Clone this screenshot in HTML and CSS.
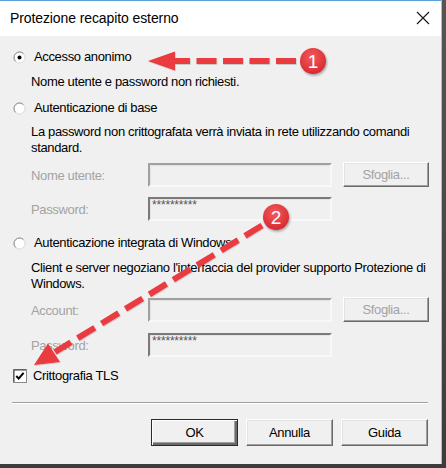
FILE: index.html
```html
<!DOCTYPE html>
<html lang="it">
<head>
<meta charset="utf-8">
<title>Protezione recapito esterno</title>
<link rel="stylesheet" href="styles.css">
</head>
<body>
<div class="frame">
  <div class="titlebar">
    <span class="title">Protezione recapito esterno</span>
    <svg class="close" width="14" height="14" viewBox="0 0 14 14"><path d="M1 1 L13 13 M13 1 L1 13" stroke="#1a1a1a" stroke-width="1.2" fill="none"/></svg>
  </div>
  <div class="content">
    <div class="radio-row r1">
      <svg class="radio" width="13" height="13" viewBox="0 0 13 13">
        <circle cx="6.5" cy="6.5" r="5.5" fill="#fff" stroke="#d8d8d8"/>
        <path d="M2.6 10.4 A5.5 5.5 0 0 1 10.4 2.6" stroke="#8a8a8a" fill="none"/>
        <circle cx="6.5" cy="6.5" r="2" fill="#000"/>
      </svg>
      <span>Accesso anonimo</span>
    </div>
    <p class="desc d1">Nome utente e password non richiesti.</p>

    <div class="radio-row r2">
      <svg class="radio" width="13" height="13" viewBox="0 0 13 13">
        <circle cx="6.5" cy="6.5" r="5.5" fill="#fff" stroke="#d8d8d8"/>
        <path d="M2.6 10.4 A5.5 5.5 0 0 1 10.4 2.6" stroke="#8a8a8a" fill="none"/>
      </svg>
      <span>Autenticazione di base</span>
    </div>
    <p class="desc d2">La password non crittografata verrà inviata in rete utilizzando comandi<br>standard.</p>
    <div class="field-row f1">
      <span class="label">Nome utente:</span>
      <div class="input"></div>
      <div class="btn disabled">Sfoglia...</div>
    </div>
    <div class="field-row f2">
      <span class="label">Password:</span>
      <div class="input pwd">**********</div>
    </div>

    <div class="radio-row r3">
      <svg class="radio" width="13" height="13" viewBox="0 0 13 13">
        <circle cx="6.5" cy="6.5" r="5.5" fill="#fff" stroke="#d8d8d8"/>
        <path d="M2.6 10.4 A5.5 5.5 0 0 1 10.4 2.6" stroke="#8a8a8a" fill="none"/>
      </svg>
      <span>Autenticazione integrata di Windows</span>
    </div>
    <p class="desc d3">Client e server negoziano l'interfaccia del provider supporto Protezione di<br>Windows.</p>
    <div class="field-row f3">
      <span class="label">Account:</span>
      <div class="input"></div>
      <div class="btn disabled">Sfoglia...</div>
    </div>
    <div class="field-row f4">
      <span class="label">Password:</span>
      <div class="input pwd">**********</div>
    </div>

    <div class="check-row">
      <svg class="check" width="14" height="14" viewBox="0 0 14 14">
        <rect x="0.5" y="0.5" width="13" height="13" fill="#fff" stroke="#8a8a8a"/>
        <path d="M1 13 V1 H13" stroke="#3c3c3c" fill="none"/>
        <path d="M3.3 7 L5.7 9.6 L10.6 3.8" stroke="#000" stroke-width="2" fill="none"/>
      </svg>
      <span>Crittografia TLS</span>
    </div>

    <div class="separator"></div>

    <div class="buttons">
      <div class="btn default">OK</div>
      <div class="btn">Annulla</div>
      <div class="btn">Guida</div>
    </div>
  </div>

  <svg class="annot" width="442" height="464" viewBox="0 0 442 464">
    <defs>
      <radialGradient id="bg" cx="45%" cy="35%" r="65%">
        <stop offset="0" stop-color="#f45a5e"/>
        <stop offset="1" stop-color="#d52a30"/>
      </radialGradient>
      <filter id="sh" x="-30%" y="-30%" width="160%" height="160%">
        <feDropShadow dx="1" dy="1.5" stdDeviation="1.2" flood-color="#000" flood-opacity="0.35"/>
      </filter>
      <filter id="sh2" x="-10%" y="-30%" width="120%" height="160%">
        <feDropShadow dx="0.6" dy="0.8" stdDeviation="0.6" flood-color="#000" flood-opacity="0.2"/>
      </filter>
    </defs>
    <g filter="url(#sh2)">
      <line x1="296" y1="61" x2="170" y2="61" stroke="#e93a41" stroke-width="6" stroke-dasharray="20 6.5"/>
      <polygon points="148,61 175,51.5 175,70.5" fill="#e93a41"/>
      <line x1="262" y1="225.5" x2="55" y2="352" stroke="#e93a41" stroke-width="6" stroke-dasharray="20 8"/>
      <polygon points="34,365 48,343.5 60,362" fill="#e93a41"/>
    </g>
    <g filter="url(#sh)">
      <circle cx="313" cy="61" r="13" fill="url(#bg)"/>
      <circle cx="276" cy="217" r="13" fill="url(#bg)"/>
    </g>
    <text x="313" y="68" class="badge">1</text>
    <text x="276" y="224" class="badge">2</text>
  </svg>
</div>
</body>
</html>
```

FILE: styles.css
```css
* { box-sizing: border-box; }

html, body {
  margin: 0;
  padding: 0;
}

body {
  width: 446px;
  height: 468px;
  background: linear-gradient(#555, #3c3c3c);
  font-family: "Liberation Sans", Arial, sans-serif;
  font-size: 13px;
  letter-spacing: -0.35px;
  color: #000;
  overflow: hidden;
}

.frame {
  position: relative;
  width: 442px;
  height: 464px;
  background: #f0f0f0;
  border-right: 1px solid #9cc0e6;
}

.titlebar {
  height: 36px;
  background: #fff;
  border-top: 1px solid #5e9ed6;
  display: flex;
  align-items: center;
  justify-content: space-between;
  padding: 0 11px 0 10px;
}

.title {
  font-size: 14px;
  letter-spacing: -0.1px;
  color: #000;
  padding-bottom: 2px;
}

.close {
  display: block;
  margin-bottom: 2px;
}

.content {
  padding: 13px 13px 0 12px;
}

.radio-row,
.check-row {
  display: flex;
  align-items: center;
  height: 16px;
  line-height: 16px;
}

.radio {
  display: block;
  margin-left: 1px;
  margin-right: 8px;
  flex: none;
}

.check {
  display: block;
  margin-left: 1px;
  margin-right: 6px;
  flex: none;
}

.desc {
  margin: 0;
  padding-left: 19px;
  line-height: 16px;
}

.r2 { margin-top: 10px; }
.r3 { margin-top: 14px; }
.d1 { margin-top: 9px; }
.d2 { margin-top: 8px; }
.d3 { margin-top: 9px; }

.field-row {
  display: flex;
  align-items: center;
  height: 24px;
}

.f1 { margin-top: 7px; }
.f2 { margin-top: 10px; }
.f3 { margin-top: 6px; }
.f4 { margin-top: 11px; }

.label {
  width: 136px;
  padding-left: 19px;
  color: #a3a3a3;
  flex: none;
}

.input {
  width: 184px;
  height: 24px;
  flex: none;
  border: 2px solid;
  border-color: #a0a0a0 #f8f8f8 #f8f8f8 #a0a0a0;
  box-shadow: inset 1px 1px 0 #e3e3e3;
  background: #f0f0f0;
}

.input.pwd {
  border-color: #7a7a7a #f8f8f8 #f8f8f8 #7a7a7a;
  font-size: 12px;
  letter-spacing: -0.2px;
  line-height: 12px;
  padding-left: 2px;
  color: #555;
}

.btn {
  height: 27px;
  width: 87px;
  display: flex;
  align-items: center;
  justify-content: center;
  background: #f0f0f0;
  border: 1px solid;
  border-color: #fff #6a6a6a #6a6a6a #fff;
  box-shadow: inset -1px -1px 0 #a0a0a0, inset 1px 1px 0 #e3e3e3;
  flex: none;
}

.field-row .btn {
  height: 25px;
  width: 86px;
  margin-left: 11px;
  margin-top: -1px;
}

.btn.disabled {
  color: #a3a3a3;
}

.btn.default {
  border: 1px solid #2a2a2a;
  box-shadow: inset 1px 1px 0 #fff, inset -2px -2px 0 #6a6a6a, inset -3px -3px 0 #a0a0a0;
}

.check-row {
  margin-top: 11px;
}

.separator {
  margin-top: 18px;
  height: 2px;
  border-top: 1px solid #a0a0a0;
  border-bottom: 1px solid #fff;
}

.buttons {
  margin-top: 15px;
  display: flex;
  justify-content: flex-end;
  gap: 8px;
  margin-right: 0;
}

.annot {
  position: absolute;
  left: 0;
  top: 0;
  pointer-events: none;
}

.badge {
  fill: #fff;
  font-family: "Liberation Sans", Arial, sans-serif;
  font-size: 19px;
  letter-spacing: 0;
  text-anchor: middle;
}
```
